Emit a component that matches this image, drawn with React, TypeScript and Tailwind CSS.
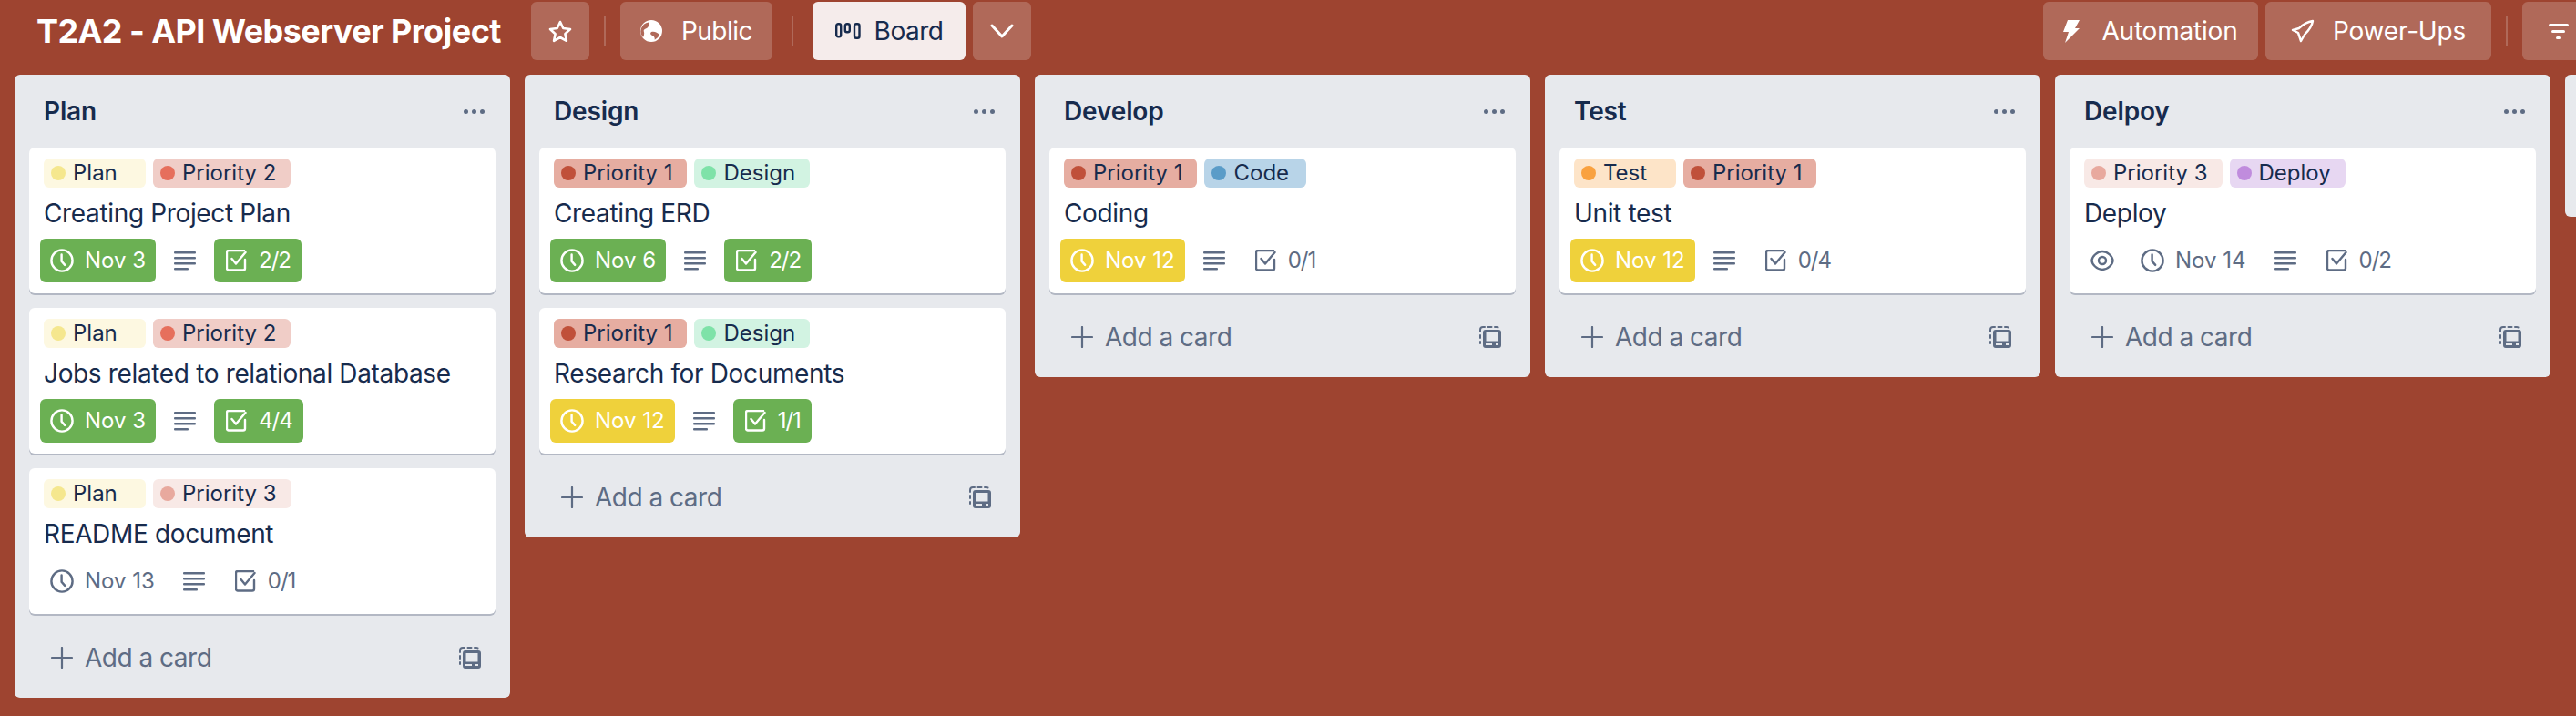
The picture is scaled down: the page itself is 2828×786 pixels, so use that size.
import React from "react";

const lab: Record<string, { bg: string; dot: string }> = {
  Plan: { bg: "bg-[#fdf8e1]", dot: "bg-[#f5e78e]" },
  "Priority 1": { bg: "bg-[#e6ada1]", dot: "bg-[#c0503a]" },
  "Priority 2": { bg: "bg-[#f0cdc7]", dot: "bg-[#e66f5c]" },
  "Priority 3": { bg: "bg-[#f8e9e6]", dot: "bg-[#e8a99e]" },
  Design: { bg: "bg-[#d2f3e2]", dot: "bg-[#7ee2a8]" },
  Code: { bg: "bg-[#b8d4e8]", dot: "bg-[#5a9cc8]" },
  Test: { bg: "bg-[#fde4c8]", dot: "bg-[#f9a13f]" },
  Deploy: { bg: "bg-[#e7d7f2]", dot: "bg-[#c08cdd]" },
};

function Clock() {
  return (
    <svg viewBox="0 0 26 28" className="w-[26px] h-[28px] shrink-0" fill="none" stroke="currentColor" strokeWidth="2.4" strokeLinecap="round">
      <circle cx="13" cy="14" r="11.6" />
      <path d="M12.6 7.5v7.2l3.6 4.2" />
    </svg>
  );
}

function Check() {
  return (
    <svg viewBox="0 0 23 24" className="w-[23px] h-[24px] shrink-0" fill="none" stroke="currentColor" strokeWidth="2.4" strokeLinecap="round" strokeLinejoin="round">
      <path d="M21 11v9.500a2 2 0 0 1-2 2H3a2 2 0 0 1-2-2V3a2 2 0 0 1 2-2h17" />
      <path d="M6.500 10l4.500 5.500L21.500 3" />
    </svg>
  );
}

function Desc() {
  return (
    <svg viewBox="0 0 24 22" className="w-[24px] h-[22px] shrink-0 text-[#5e6c84]" fill="currentColor">
      <rect x="0" y="1" width="24" height="2.600" rx="1" />
      <rect x="0" y="7" width="24" height="2.600" rx="1" />
      <rect x="0" y="13" width="24" height="2.600" rx="1" />
      <rect x="0" y="19" width="16" height="2.600" rx="1" />
    </svg>
  );
}

function Eye() {
  return (
    <svg viewBox="0 0 26 28" className="w-[26px] h-[28px] shrink-0 mr-[-2px] ml-[11px] text-[#5e6c84]" fill="none" stroke="currentColor" strokeWidth="2.4">
      <path d="M1.500 14C1.500 10 7 4 13 4s11.500 6 11.500 10-5.500 10-11.500 10S1.500 18 1.500 14z" />
      <circle cx="13" cy="14" r="4" />
    </svg>
  );
}

function Label({ name }: { name: string }) {
  const l = lab[name];
  return (
    <div className={`h-[32px] min-w-[112px] rounded-[6px] pl-[8px] pr-[16px] flex items-center gap-[8px] ${l.bg}`}>
      <span className={`w-[16px] h-[16px] rounded-full ${l.dot}`} />
      <span className="text-[24px] leading-[32px] text-[#172b4d]">{name}</span>
    </div>
  );
}

type CardT = { labels: string[]; title: string; date: string; status: "green" | "yellow" | "none"; check: string; checkDone?: boolean; eye?: boolean };

function Card({ c }: { c: CardT }) {
  const dateCls = c.status === "green" ? "bg-[#6bb053] text-white" : c.status === "yellow" ? "bg-[#efd13b] text-white" : "text-[#5e6c84]";
  const checkCls = c.checkDone ? "bg-[#6bb053] text-white" : "text-[#5e6c84]";
  return (
    <div className="w-[512px] h-[160px] shrink-0 bg-white rounded-[6px] shadow-[0_2px_0_#b3b8c4] px-[16px] pt-[12px]">
      <div className="flex gap-[8px]">
        {c.labels.map((n) => (
          <Label key={n} name={n} />
        ))}
      </div>
      <div className="mt-[10px] h-[36px] text-[28px] leading-[36px] tracking-[-0.35px] text-[#172b4d] whitespace-nowrap">{c.title}</div>
      <div className="mt-[10px] -ml-[4px] flex items-center gap-[20px]">
        {c.eye && <Eye />}
        <div className={`h-[48px] rounded-[6px] pl-[11px] pr-[11px] flex items-center gap-[12px] text-[24px] ${dateCls}`}>
          <Clock />
          <span>{c.date}</span>
        </div>
        <Desc />
        <div className={`h-[48px] rounded-[6px] pl-[13px] pr-[12px] flex items-center gap-[13px] text-[24px] ${checkCls}`}>
          <Check />
          <span className="tracking-[-1px]">{c.check}</span>
        </div>
      </div>
    </div>
  );
}

const lists: { name: string; cards: CardT[] }[] = [
  {
    name: "Plan",
    cards: [
      { labels: ["Plan", "Priority 2"], title: "Creating Project Plan", date: "Nov 3", status: "green", check: "2/2", checkDone: true },
      { labels: ["Plan", "Priority 2"], title: "Jobs related to relational Database", date: "Nov 3", status: "green", check: "4/4", checkDone: true },
      { labels: ["Plan", "Priority 3"], title: "README document", date: "Nov 13", status: "none", check: "0/1" },
    ],
  },
  {
    name: "Design",
    cards: [
      { labels: ["Priority 1", "Design"], title: "Creating ERD", date: "Nov 6", status: "green", check: "2/2", checkDone: true },
      { labels: ["Priority 1", "Design"], title: "Research for Documents", date: "Nov 12", status: "yellow", check: "1/1", checkDone: true },
    ],
  },
  { name: "Develop", cards: [{ labels: ["Priority 1", "Code"], title: "Coding", date: "Nov 12", status: "yellow", check: "0/1" }] },
  { name: "Test", cards: [{ labels: ["Test", "Priority 1"], title: "Unit test", date: "Nov 12", status: "yellow", check: "0/4" }] },
  { name: "Delpoy", cards: [{ labels: ["Priority 3", "Deploy"], title: "Deploy", date: "Nov 14", status: "none", check: "0/2", eye: true }] },
];

function List({ name, cards }: { name: string; cards: CardT[] }) {
  return (
    <div className="w-[544px] shrink-0 bg-[#e7e9ed] rounded-[6px] px-[16px]">
      <div className="h-[80px] flex items-center justify-between pl-[16px] pr-[12px]">
        <span className="text-[28px] font-semibold tracking-[-0.15px] text-[#172b4d]">{name}</span>
        <span className="flex gap-[4px]">
          <i className="w-[5px] h-[5px] rounded-full bg-[#5e6c84]" />
          <i className="w-[5px] h-[5px] rounded-full bg-[#5e6c84]" />
          <i className="w-[5px] h-[5px] rounded-full bg-[#5e6c84]" />
        </span>
      </div>
      <div className="flex flex-col gap-[16px]">
        {cards.map((c) => (
          <Card key={c.title} c={c} />
        ))}
      </div>
      <div className="h-[92px] pt-[4px] pl-[24px] pr-[16px] flex items-center justify-between text-[#5e6c84]">
        <div className="flex items-center gap-[13px]">
          <svg viewBox="0 0 24 24" className="w-[24px] h-[24px]" fill="none" stroke="currentColor" strokeWidth="2.2" strokeLinecap="round">
            <path d="M12 1v22M1 12h22" />
          </svg>
          <span className="text-[28px] tracking-[-0.5px]">Add a card</span>
        </div>
        <svg viewBox="0 0 24 24" className="w-[24px] h-[24px]" fill="none">
          <path d="M1 19v-2M1 13v-3M1 6V4a3 3 0 0 1 3-3h2M9.500 1h4M17 1h2a3 3 0 0 1 1.500.4" stroke="currentColor" strokeWidth="2" strokeLinecap="round" />
          <path fillRule="evenodd" clipRule="evenodd" fill="currentColor" d="M7 4h14a3 3 0 0 1 3 3v14a3 3 0 0 1-3 3H7a3 3 0 0 1-3-3V7a3 3 0 0 1 3-3zm.5 3v9.500h13V7h-13zM7 19v2h7v-2H7zm11 0v2h3v-2h-3z" />
        </svg>
      </div>
    </div>
  );
}

const btn = "h-[64px] rounded-[6px] bg-[#b06959] text-white flex items-center justify-center shrink-0 text-[28px]";
const divider = <div className="w-[2px] h-[32px] bg-[#b06959] shrink-0" />;

export default function App() {
  return (
    <div className="w-[2828px] h-[786px] overflow-hidden bg-[#9e4430] font-['Inter',sans-serif]">
      <div className="h-[66px] pt-[2px] pl-[40px] flex items-center">
        <div className="w-[543px] shrink-0 text-[36px] font-bold tracking-[-0.57px] text-white whitespace-nowrap">T2A2 - API Webserver Project</div>
        <div className={`${btn} w-[64px]`}>
          <svg viewBox="0 0 26 25" className="w-[26px] h-[25px]" fill="none" stroke="white" strokeWidth="2.600" strokeLinejoin="round">
            <path d="M13 2l3.300 7 7.700 1-5.600 5.200 1.500 7.600L13 19l-6.900 3.800 1.500-7.600L2 10l7.700-1z" />
          </svg>
        </div>
        <div className="w-[34px] flex justify-center shrink-0">{divider}</div>
        <div className={`${btn} w-[167px] gap-[21px] tracking-[-0.5px]`}>
          <svg viewBox="0 0 24 24" className="w-[24px] h-[24px]" fill="white">
            <path fillRule="evenodd" clipRule="evenodd" d="M12 0a12 12 0 1 1 0 24 12 12 0 0 1 0-24zM9 2.400A10 10 0 0 0 3 19c1-2 1.600-4 .8-6.500-.4-1.400.4-2.500 2-3 1.700-.5 3-1.500 3.200-3.500.1-1.400.3-2.600 0-3.600zM21 16c-2-2.200-5-3.600-8-3.200-2 .3-2.500 2.500-1 3.500 1.500 1 3 1.200 3.500 3 .2 1 .3 1.800.2 2.500A10 10 0 0 0 21 16z" />
          </svg>
          <span>Public</span>
        </div>
        <div className="w-[44px] flex justify-center shrink-0">{divider}</div>
        <div className="h-[64px] w-[168px] rounded-[6px] bg-[#f5eceb] text-[#172b4d] flex items-center justify-center gap-[15px] shrink-0 text-[28px] tracking-[-0.5px]">
          <svg viewBox="0 0 28 18" className="w-[28px] h-[18px]" fill="none" stroke="currentColor" strokeWidth="2.400">
            <rect x="1.200" y="1.200" width="5" height="14" rx="2" />
            <rect x="10.800" y="1.200" width="5" height="9" rx="2" />
            <rect x="21" y="1.200" width="5.500" height="15.600" rx="2" />
          </svg>
          <span>Board</span>
        </div>
        <div className={`${btn} w-[64px] ml-[8px]`}>
          <svg viewBox="0 0 26 16" className="w-[26px] h-[16px]" fill="none" stroke="white" strokeWidth="3" strokeLinecap="round" strokeLinejoin="round">
            <path d="M2 2l11 12L24 2" />
          </svg>
        </div>
        <div className="ml-[1111px] flex items-center">
          <div className={`${btn} w-[236px] gap-[24px] tracking-[-0.2px]`}>
            <svg viewBox="0 0 18 25" className="w-[18px] h-[25px]" fill="white">
              <path d="M5 0h13l-5 9h5L2 25l4-12H0z" />
            </svg>
            <span>Automation</span>
          </div>
          <div className={`${btn} w-[248px] ml-[8px] gap-[20px] tracking-[-0.2px]`}>
            <svg viewBox="0 0 26 26" className="w-[26px] h-[26px]" fill="none" stroke="white" strokeWidth="2.400" strokeLinejoin="round">
              <path d="M24 2C17 3 12 7 9 10l-7 2 6 3 3 9 4-7c4-4 8-9 9-15z" />
            </svg>
            <span>Power-Ups</span>
          </div>
          <div className="w-[34px] flex justify-center shrink-0">{divider}</div>
          <div className={`${btn} w-[80px]`}>
            <svg viewBox="0 0 22 17" className="w-[22px] h-[17px]" fill="white">
              <rect x="0" y="0" width="22" height="3" rx="1.500" />
              <rect x="3" y="7" width="15" height="3" rx="1.500" />
              <rect x="8" y="14" width="5" height="3" rx="1.500" />
            </svg>
          </div>
        </div>
      </div>
      <div className="mt-[16px] pl-[16px] flex items-start gap-[16px]">
        {lists.map((l) => (
          <List key={l.name} name={l.name} cards={l.cards} />
        ))}
        <div className="w-[544px] h-[156px] shrink-0 rounded-[6px] bg-[#e7e9ed]" />
      </div>
    </div>
  );
}
